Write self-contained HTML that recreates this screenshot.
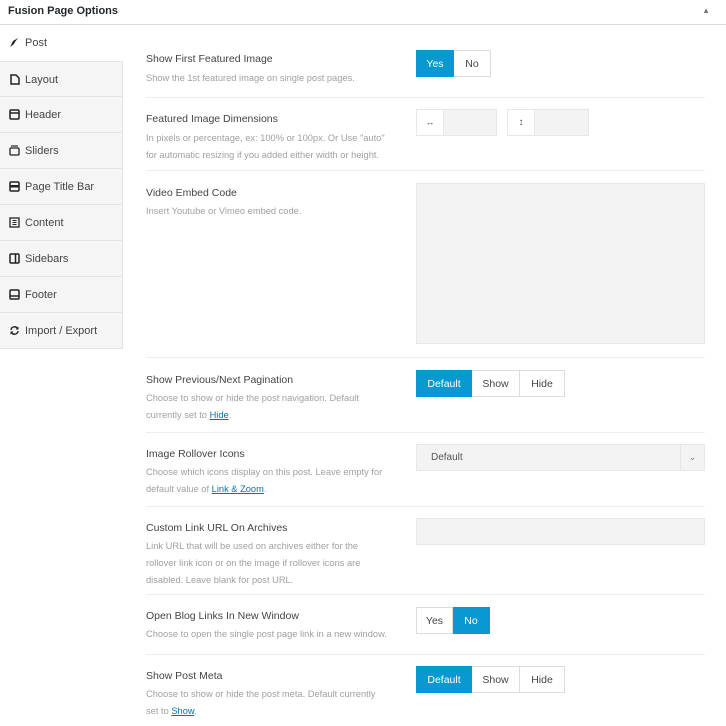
<!DOCTYPE html>
<html><head><style>
*{box-sizing:border-box;margin:0;padding:0}
body{width:726px;height:726px;background:#fff;font-family:"Liberation Sans",sans-serif;position:relative;overflow:hidden;color:#333}
.a{position:absolute}
.hdr{left:0;top:0;width:726px;height:25px;border-bottom:1px solid #ddd;font-size:11px;font-weight:bold;padding:5px 8px;color:#23282d}
.tab{position:absolute;left:0;width:123px;height:36px;background:#f5f5f5;border-bottom:1px solid #e4e4e4;border-right:1px solid #e4e4e4;font-size:11px;color:#444;padding:12px 0 0 25px}
.tab.on{background:#fff;border-right:none;border-bottom:none}
.ic{position:absolute;left:9px;top:12px;width:11px;height:11px}
.lbl{position:absolute;left:146px;font-size:10.5px;color:#444}
.d{position:absolute;left:146px;font-size:9.3px;color:#a0a0a0;line-height:17px;white-space:nowrap}
.d u{color:#0073aa}
.hr{position:absolute;left:146px;width:559px;height:1px;background:#eee}
.bg{position:absolute;display:flex;height:27px;font-size:10.5px}
.bg span{display:flex;align-items:center;justify-content:center;border:1px solid #ddd;background:#fff;color:#444;height:27px}
.bg span+span{border-left:none}
.bg .on{background:#0999d0;border-color:#0999d0;color:#fff}
.fld{position:absolute;background:#f3f3f3;border:1px solid #e8e8e8}
</style></head><body>
<div class="a hdr">Fusion Page Options<span style="position:absolute;right:16px;top:6px;font-size:8px;color:#777">▲</span></div>

<div class="tab on" style="top:25px"><svg class="ic" viewBox="0 0 11 11"><path d="M9 1 L4 4 L3 6 L1 10 L5 7 L6 5 Z" fill="#222"/></svg>Post</div>
<div class="tab" style="top:61px;border-top:1px solid #e4e4e4"><svg class="ic" viewBox="0 0 11 11"><path d="M2 1h5l3 3v6H2z" fill="none" stroke="#222" stroke-width="1.5"/></svg>Layout</div>
<div class="tab" style="top:97px"><svg class="ic" viewBox="0 0 11 11"><rect x="1" y="1" width="9" height="9" rx="1" fill="none" stroke="#222" stroke-width="1.5"/><path d="M1 4h9" stroke="#222" stroke-width="1.5"/></svg>Header</div>
<div class="tab" style="top:133px"><svg class="ic" viewBox="0 0 11 11"><rect x="1" y="3" width="9" height="7" rx="1" fill="none" stroke="#222" stroke-width="1.3"/><path d="M2 1h7" stroke="#222" stroke-width="1.2"/></svg>Sliders</div>
<div class="tab" style="top:169px"><svg class="ic" viewBox="0 0 11 11"><rect x="1" y="1" width="9" height="9" rx="1" fill="none" stroke="#222" stroke-width="1.5"/><rect x="1" y="4" width="9" height="2.5" fill="#222"/></svg>Page Title Bar</div>
<div class="tab" style="top:205px"><svg class="ic" viewBox="0 0 11 11"><rect x="1" y="1" width="9" height="9" fill="none" stroke="#222" stroke-width="1.3"/><path d="M3.5 3.5h4M3.5 5.5h4M3.5 7.5h4" stroke="#222"/></svg>Content</div>
<div class="tab" style="top:241px"><svg class="ic" viewBox="0 0 11 11"><rect x="1" y="1" width="9" height="9" rx="1" fill="none" stroke="#222" stroke-width="1.5"/><path d="M6.5 1v9" stroke="#222" stroke-width="1.5"/></svg>Sidebars</div>
<div class="tab" style="top:277px"><svg class="ic" viewBox="0 0 11 11"><rect x="1" y="1" width="9" height="9" rx="1" fill="none" stroke="#222" stroke-width="1.5"/><path d="M1 7h9" stroke="#222" stroke-width="1.5"/></svg>Footer</div>
<div class="tab" style="top:313px"><svg class="ic" viewBox="0 0 11 11"><path d="M2 5a3.5 3.5 0 0 1 6.5-1.5M9 6a3.5 3.5 0 0 1-6.5 1.5" fill="none" stroke="#222" stroke-width="1.4"/><path d="M9.5 1.5v3h-3z M1.5 9.5v-3h3z" fill="#222"/></svg>Import / Export</div>

<div class="lbl" style="top:53px">Show First Featured Image</div>
<div class="d" style="top:70px">Show the 1st featured image on single post pages.</div>
<div class="bg" style="left:416px;top:50px"><span class="on" style="width:38px">Yes</span><span style="width:37px">No</span></div>
<div class="hr" style="top:97px"></div>

<div class="lbl" style="top:113px">Featured Image Dimensions</div>
<div class="d" style="top:130px">In pixels or percentage, ex: 100% or 100px. Or Use "auto"<br>for automatic resizing if you added either width or height.</div>
<div class="fld" style="left:416px;top:109px;width:81px;height:27px"><div style="position:absolute;left:0;top:0;width:27px;height:25px;background:#fff;border-right:1px solid #e8e8e8;font-size:9px;text-align:center;line-height:25px;color:#555">↔</div></div>
<div class="fld" style="left:507px;top:109px;width:82px;height:27px"><div style="position:absolute;left:0;top:0;width:27px;height:25px;background:#fff;border-right:1px solid #e8e8e8;font-size:10px;text-align:center;line-height:25px;color:#555">↕</div></div>
<div class="hr" style="top:170px"></div>

<div class="lbl" style="top:187px">Video Embed Code</div>
<div class="d" style="top:203px">Insert Youtube or Vimeo embed code.</div>
<div class="fld" style="left:416px;top:183px;width:289px;height:161px"></div>
<div class="hr" style="top:357px"></div>

<div class="lbl" style="top:374px">Show Previous/Next Pagination</div>
<div class="d" style="top:390px">Choose to show or hide the post navigation. Default<br>currently set to <u>Hide</u>.</div>
<div class="bg" style="left:416px;top:370px"><span class="on" style="width:56px">Default</span><span style="width:48px">Show</span><span style="width:45px">Hide</span></div>
<div class="hr" style="top:432px"></div>

<div class="lbl" style="top:448px">Image Rollover Icons</div>
<div class="d" style="top:464px">Choose which icons display on this post. Leave empty for<br>default value of <u>Link &amp; Zoom</u>.</div>
<div class="fld" style="left:416px;top:444px;width:289px;height:27px;font-size:10px;color:#555;padding:7px 14px">Default<div style="position:absolute;right:0;top:0;width:24px;height:25px;border-left:1px solid #e6e6e6;font-size:9px;line-height:25px;text-align:center;color:#777">⌄</div></div>
<div class="hr" style="top:506px"></div>

<div class="lbl" style="top:522px">Custom Link URL On Archives</div>
<div class="d" style="top:538px">Link URL that will be used on archives either for the<br>rollover link icon or on the image if rollover icons are<br>disabled. Leave blank for post URL.</div>
<div class="fld" style="left:416px;top:518px;width:289px;height:27px"></div>
<div class="hr" style="top:594px"></div>

<div class="lbl" style="top:610px">Open Blog Links In New Window</div>
<div class="d" style="top:626px">Choose to open the single post page link in a new window.</div>
<div class="bg" style="left:416px;top:607px"><span style="width:37px">Yes</span><span class="on" style="width:37px">No</span></div>
<div class="hr" style="top:654px"></div>

<div class="lbl" style="top:670px">Show Post Meta</div>
<div class="d" style="top:686px">Choose to show or hide the post meta. Default currently<br>set to <u>Show</u>.</div>
<div class="bg" style="left:416px;top:666px"><span class="on" style="width:56px">Default</span><span style="width:48px">Show</span><span style="width:45px">Hide</span></div>
</body></html>
